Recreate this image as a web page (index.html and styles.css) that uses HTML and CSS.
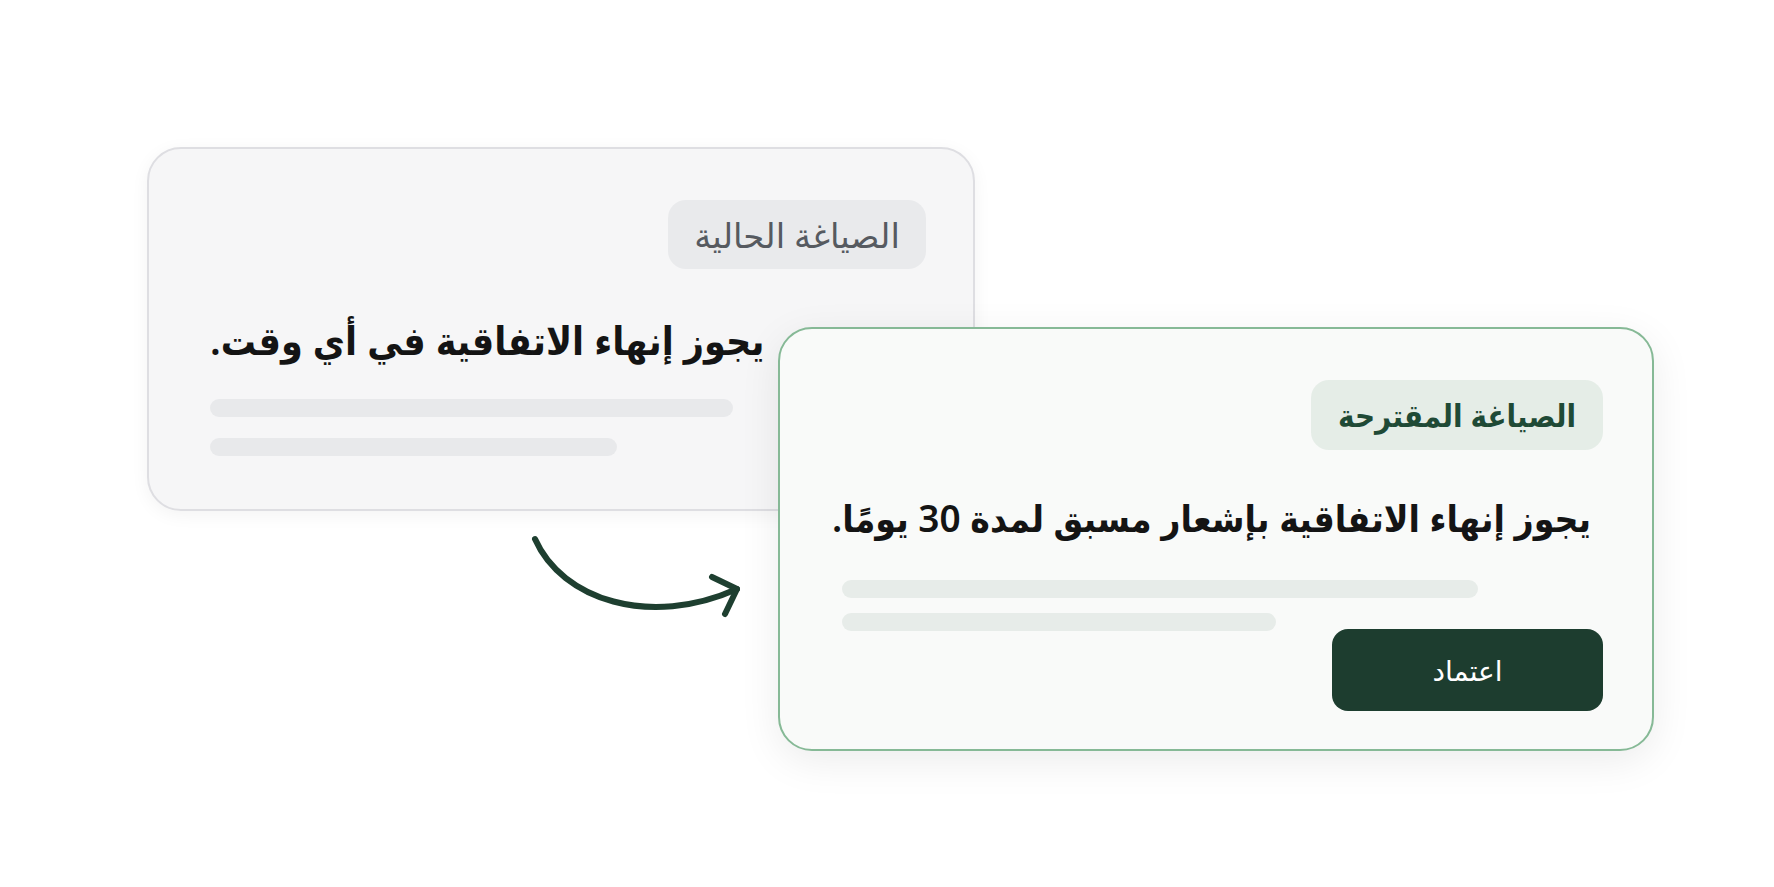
FILE: index.html
```html
<!DOCTYPE html>
<html lang="ar" dir="rtl">
<head>
    <meta charset="UTF-8">
    <meta name="viewport" content="width=device-width, initial-scale=1.0">
    <title>مراجعة الصياغة</title>
    <link rel="stylesheet" href="styles.css">
</head>
<body>
    <div class="stage">
        <div class="card current">
            <span class="badge">الصياغة الحالية</span>
            <p class="clause">يجوز إنهاء الاتفاقية في أي وقت.</p>
            <div class="line long"></div>
            <div class="line short"></div>
        </div>

        <svg class="arrow" width="240" height="120" viewBox="0 0 240 120" fill="none" stroke="#1e3f30" stroke-width="6" stroke-linecap="round" stroke-linejoin="round">
            <path d="M35 39 C 62 100 150 128 237 89"/>
            <path d="M212 77 L237 89 L225 114"/>
        </svg>

        <div class="card proposed">
            <span class="badge">الصياغة المقترحة</span>
            <p class="clause">يجوز إنهاء الاتفاقية بإشعار مسبق لمدة 30 يومًا.</p>
            <div class="line long"></div>
            <div class="line short"></div>
            <button class="approve">اعتماد</button>
        </div>
    </div>
</body>
</html>
```

FILE: styles.css
```css
* { box-sizing: border-box; margin: 0; padding: 0; }
body { background: #ffffff; font-family: "Noto Sans", "DejaVu Sans", sans-serif; color: #141414; }
.stage { position: relative; width: 1774px; height: 887px; direction: ltr; }

.card { direction: rtl; display: flex; flex-direction: column; border-radius: 34px; }
.card.current { position: absolute; left: 147px; top: 147px; width: 828px; height: 364px; padding: 51px 47px 0 61px; background: #f6f6f7; border: 2px solid #dedee2; box-shadow: 0 4px 18px rgba(0, 0, 0, 0.05); }
.card.proposed { position: absolute; left: 778px; top: 327px; width: 876px; height: 424px; padding: 51px 49px 0 62px; background: #f9faf9; border: 2px solid #86b996; box-shadow: 0 10px 40px rgba(0, 0, 0, 0.08); }

.badge { align-self: flex-start; display: flex; align-items: center; justify-content: center; height: 69px; border-radius: 18px; }
.current .badge { width: 258px; background: #e9eaec; color: #565a60; font-size: 34px; font-weight: 400; }
.proposed .badge { width: 292px; height: 70px; background: #e5ede7; color: #1f4a36; font-size: 31px; font-weight: 600; font-stretch: 85%; }

.clause { font-weight: 600; font-stretch: 70%; line-height: 60px; white-space: nowrap; }
.current .clause { font-size: 39px; text-align: left; margin-top: 41px; }
.proposed .clause { font-size: 37px; margin-right: 12px; margin-top: 38px; }

.line { height: 18px; border-radius: 9px; background: #e8e9eb; align-self: flex-end; }
.current .line.long { width: 523px; margin-top: 29px; }
.current .line.short { width: 407px; margin-top: 21px; }
.proposed .line { background: #e7ece9; }
.proposed .line.long { width: 636px; margin-top: 32px; }
.proposed .line.short { width: 434px; margin-top: 15px; }

.approve { align-self: flex-start; width: 271px; height: 82px; margin-top: -2px; border: none; border-radius: 16px; background: #1d3d2f; color: #ffffff; font-family: inherit; font-size: 28px; cursor: pointer; }

.arrow { position: absolute; left: 500px; top: 500px; }
```
